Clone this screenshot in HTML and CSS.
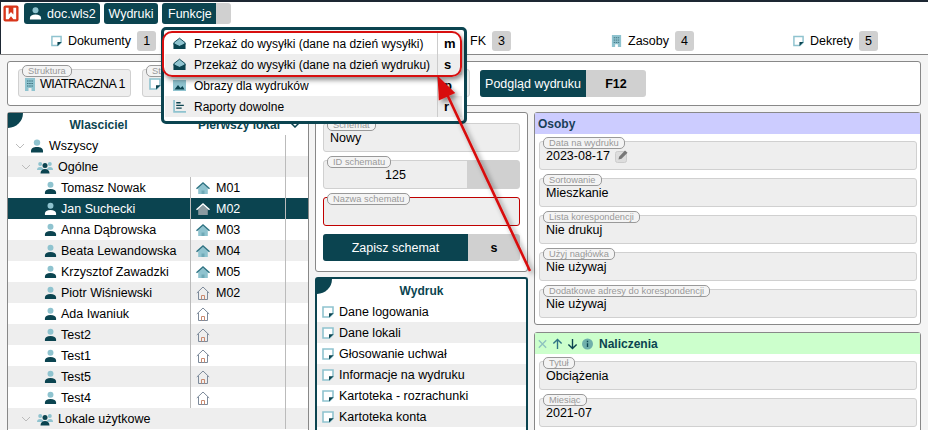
FILE: index.html
```html
<!DOCTYPE html>
<html lang="pl">
  <head>
    <meta charset="UTF-8" />
    <meta name="viewport" content="width=device-width, initial-scale=1.0" />
    <title>Wydruki</title>
    <link rel="stylesheet" href="styles.css">
  </head>
  <body>
    <svg class="sprites" width="0" height="0">
      <symbol id="i-doc" viewBox="0 0 12 12">
        <path d="M1 1h10v6.500L7.500 11H1z" fill="#fff" stroke="#8fc3cf" stroke-width="1.600"/>
        <path d="M7 11.500V7.200h4.600z" fill="#0b4450"/>
      </symbol>
      <symbol id="i-person" viewBox="0 0 14 14">
        <circle cx="7" cy="3.600" r="3.200" fill="#8fc3cf"/>
        <path d="M1 13.500v-1.600C1 9.400 3.400 8 7 8s6 1.400 6 3.900v1.600z" fill="#0b4450"/>
      </symbol>
      <symbol id="i-person-sel" viewBox="0 0 14 14">
        <circle cx="7" cy="3.600" r="3.200" fill="#8fc3cf"/>
        <path d="M1 13.500v-1.600C1 9.400 3.400 8 7 8s6 1.400 6 3.900v1.600z" fill="#fff"/>
      </symbol>
      <symbol id="i-group" viewBox="0 0 16 14">
        <circle cx="3.200" cy="4" r="2" fill="#8fc3cf"/>
        <circle cx="12.800" cy="4" r="2" fill="#8fc3cf"/>
        <path d="M0 10c0-2 1.200-3 3.200-3s3 1 3 3zM10 10c0-2 1-3 3-3s3 1 3 3z" fill="#8fc3cf"/>
        <circle cx="8" cy="5.400" r="2.500" fill="#0b4450"/>
        <path d="M3.500 13.500c0-3 1.800-4.500 4.500-4.500s4.500 1.500 4.500 4.500z" fill="#0b4450"/>
      </symbol>
      <symbol id="i-house" viewBox="0 0 14 13">
        <path d="M2.200 6.500 7 2.500l4.800 4v6H2.200z" fill="#8fc3cf"/>
        <path d="M5.500 9h3v3.500h-3z" fill="#6ea9b6"/>
        <path d="M0 6.800 7 .5l7 6.300-1 1L7 2.500 1 7.800z" fill="#2f7484"/>
      </symbol>
      <symbol id="i-house-sel" viewBox="0 0 14 13">
        <path d="M2.200 6.500 7 2.500l4.800 4v6H2.200z" fill="#8a9aa0"/>
        <path d="M0 6.800 7 .5l7 6.300-1 1L7 2.500 1 7.800z" fill="#fff"/>
      </symbol>
      <symbol id="i-house-empty" viewBox="0 0 14 14">
        <path d="M2.500 6v7.500h9V6M.8 7 7 1l6.200 6" fill="none" stroke="#7d8a9a" stroke-width="1"/>
        <path d="M5.500 13.500V9.500h3v4" fill="none" stroke="#c98a70" stroke-width="1"/>
      </symbol>
      <symbol id="i-building" viewBox="0 0 10 13">
        <path d="M0 0h10v13H6.500V10h-3v3H0z" fill="#8fc3cf"/>
        <path d="M2 3h6M2 5.500h6M2 8h6" stroke="#3c6f7c" stroke-dasharray="1.500 .7"/>
      </symbol>
      <symbol id="i-mail" viewBox="0 0 14 13">
        <path d="M1 5.500 7 .8l6 4.700v2L7 10 1 7.500z" fill="#8fc3cf" stroke="#0b4450"/>
        <path d="M.5 6 7 9.300 13.500 6v6.500H.5z" fill="#0b4450"/>
      </symbol>
      <symbol id="i-image" viewBox="0 0 13 11">
        <path d="M0 0h13v11H0z" fill="#8fc3cf"/>
        <path d="M1.500 9.500 5 5l2.500 3 2-2 2 3.500z" fill="#0b4450"/>
      </symbol>
      <symbol id="i-report" viewBox="0 0 12 12">
        <path d="M1 0v11h11" fill="none" stroke="#8fc3cf" stroke-width="1.600"/>
        <path d="M3 2.500h4M3 5h7M3 7.500h5" stroke="#0b4450" stroke-width="1.300"/>
      </symbol>
    </svg>

    <nav class="topbar">
      <svg class="logo" viewBox="0 0 17 18">
        <rect x="0.500" y="0.500" width="16" height="17" rx="2" fill="#d8351a"/>
        <path d="M3 3h3v7l2.500-2.500L11 10V3h3v12h-3l-2.500-3L6 15H3z" fill="#fff"/>
      </svg>
      <div class="tab tab-user"><svg class="ico"><use href="#i-person-sel"/></svg>doc.wls2</div>
      <div class="tab tab-print">Wydruki</div>
      <div class="tab tab-open"><span>Funkcje</span><i></i></div>
    </nav>

    <div class="modules">
      <div class="module"><svg class="ico"><use href="#i-doc"/></svg>Dokumenty<b>1</b></div>
      <div class="module"></div>
      <div class="module module-fk">FK<b>3</b></div>
      <div class="module"><svg class="ico"><use href="#i-building"/></svg>Zasoby<b>4</b></div>
      <div class="module"><svg class="ico"><use href="#i-doc"/></svg>Dekrety<b>5</b></div>
    </div>

    <main class="content">
      <section class="toolbar">
        <div class="field field-struct">
          <label>Struktura</label>
          <div class="value"><svg class="ico"><use href="#i-building"/></svg>WIATRACZNA 1</div>
        </div>
        <div class="field field-struct2">
          <label>St</label>
          <div class="value"><svg class="ico"><use href="#i-doc"/></svg></div>
        </div>
        <div class="split-btn preview"><span>Podgląd wydruku</span><b>F12</b></div>
      </section>

      <div class="columns">
        <section class="panel owners">
          <i class="corner"></i>
          <div class="owners-head">
            <span class="col-name">Wlasciciel</span>
            <span class="col-unit">Pierwszy lokal</span>
            <svg class="chev" viewBox="0 0 10 6"><path d="M1 1l4 4 4-4" fill="none" stroke="#0b4450" stroke-width="1.500"/></svg>
          </div>
          <div class="tree">
            <div class="row node lvl0"><svg class="chev" viewBox="0 0 10 6"><path d="M1 1l4 4 4-4" fill="none" stroke="#bbb"/></svg><svg class="ico"><use href="#i-person"/></svg>Wszyscy</div>
            <div class="row node lvl1 alt"><svg class="chev" viewBox="0 0 10 6"><path d="M1 1l4 4 4-4" fill="none" stroke="#bbb"/></svg><svg class="ico wide"><use href="#i-group"/></svg>Ogólne</div>
            <div class="row person"><span class="name"><svg class="ico"><use href="#i-person"/></svg>Tomasz Nowak</span><span class="unit"><svg class="ico"><use href="#i-house"/></svg>M01</span></div>
            <div class="row person selected"><span class="name"><svg class="ico"><use href="#i-person-sel"/></svg>Jan Suchecki</span><span class="unit"><svg class="ico"><use href="#i-house-sel"/></svg>M02</span></div>
            <div class="row person"><span class="name"><svg class="ico"><use href="#i-person"/></svg>Anna Dąbrowska</span><span class="unit"><svg class="ico"><use href="#i-house"/></svg>M03</span></div>
            <div class="row person alt"><span class="name"><svg class="ico"><use href="#i-person"/></svg>Beata Lewandowska</span><span class="unit"><svg class="ico"><use href="#i-house"/></svg>M04</span></div>
            <div class="row person"><span class="name"><svg class="ico"><use href="#i-person"/></svg>Krzysztof Zawadzki</span><span class="unit"><svg class="ico"><use href="#i-house"/></svg>M05</span></div>
            <div class="row person alt"><span class="name"><svg class="ico"><use href="#i-person"/></svg>Piotr Wiśniewski</span><span class="unit"><svg class="ico"><use href="#i-house-empty"/></svg>M02</span></div>
            <div class="row person"><span class="name"><svg class="ico"><use href="#i-person"/></svg>Ada Iwaniuk</span><span class="unit"><svg class="ico"><use href="#i-house-empty"/></svg></span></div>
            <div class="row person alt"><span class="name"><svg class="ico"><use href="#i-person"/></svg>Test2</span><span class="unit"><svg class="ico"><use href="#i-house-empty"/></svg></span></div>
            <div class="row person"><span class="name"><svg class="ico"><use href="#i-person"/></svg>Test1</span><span class="unit"><svg class="ico"><use href="#i-house-empty"/></svg></span></div>
            <div class="row person alt"><span class="name"><svg class="ico"><use href="#i-person"/></svg>Test5</span><span class="unit"><svg class="ico"><use href="#i-house-empty"/></svg></span></div>
            <div class="row person"><span class="name"><svg class="ico"><use href="#i-person"/></svg>Test4</span><span class="unit"><svg class="ico"><use href="#i-house-empty"/></svg></span></div>
            <div class="row node lvl1 alt"><svg class="chev" viewBox="0 0 10 6"><path d="M1 1l4 4 4-4" fill="none" stroke="#bbb"/></svg><svg class="ico wide"><use href="#i-group"/></svg>Lokale użytkowe</div>
          </div>
        </section>

        <div class="col-mid">
          <section class="panel schema">
            <div class="field"><label>Schemat</label><div class="value">Nowy</div></div>
            <div class="field field-id"><label>ID schematu</label><div class="value">125</div><i></i></div>
            <div class="field field-error"><label>Nazwa schematu</label><div class="value"></div></div>
            <div class="split-btn save"><span>Zapisz schemat</span><b>s</b></div>
          </section>
          <section class="panel prints">
            <i class="corner"></i>
            <h3>Wydruk</h3>
            <div class="row"><svg class="ico"><use href="#i-doc"/></svg>Dane logowania</div>
            <div class="row alt"><svg class="ico"><use href="#i-doc"/></svg>Dane lokali</div>
            <div class="row"><svg class="ico"><use href="#i-doc"/></svg>Głosowanie uchwał</div>
            <div class="row alt"><svg class="ico"><use href="#i-doc"/></svg>Informacje na wydruku</div>
            <div class="row"><svg class="ico"><use href="#i-doc"/></svg>Kartoteka - rozrachunki</div>
            <div class="row alt"><svg class="ico"><use href="#i-doc"/></svg>Kartoteka konta</div>
          </section>
        </div>

        <div class="col-right">
          <section class="panel options">
            <h4 class="opt-head people">Osoby</h4>
            <div class="opt-body">
              <div class="field"><label>Data na wydruku</label><div class="value">2023-08-17
                <svg class="pencil" viewBox="0 0 14 14"><rect x="0.500" y="2.500" width="11" height="11" rx="2" fill="#ddd" stroke="#ccc"/><path d="M3.500 10.500l.6-2.800L10 1.500l2.500 2.300-6 6z" fill="#777"/></svg></div></div>
              <div class="field"><label>Sortowanie</label><div class="value">Mieszkanie</div></div>
              <div class="field"><label>Lista korespondencji</label><div class="value">Nie drukuj</div></div>
              <div class="field"><label>Użyj nagłówka</label><div class="value">Nie używaj</div></div>
              <div class="field"><label>Dodatkowe adresy do korespondencji</label><div class="value">Nie używaj</div></div>
            </div>
          </section>
          <section class="panel options">
            <h4 class="opt-head charges">
              <svg class="act" viewBox="0 0 12 12"><path d="M2 2l8 8M10 2l-8 8" stroke="#8fc3bf" stroke-width="1.500"/></svg>
              <svg class="act" viewBox="0 0 12 12"><path d="M6 11.500V1M1.500 5.500 6 1l4.500 4.500" fill="none" stroke="#2f7484" stroke-width="1.500"/></svg>
              <svg class="act" viewBox="0 0 12 12"><path d="M6 .5V11M1.500 6.500 6 11l4.500-4.500" fill="none" stroke="#0b4450" stroke-width="1.500"/></svg>
              <svg class="act" viewBox="0 0 12 12"><circle cx="6" cy="6" r="6" fill="#6fb0ab"/><path d="M6 2.500v1.500M6 5.200v4" stroke="#0b4450" stroke-width="1.500"/></svg>
              Naliczenia
            </h4>
            <div class="opt-body">
              <div class="field"><label>Tytuł</label><div class="value">Obciążenia</div></div>
              <div class="field"><label>Miesiąc</label><div class="value">2021-07</div></div>
            </div>
          </section>
        </div>
      </div>
    </main>

    <div class="menu">
      <div class="menu-row"><svg class="ico"><use href="#i-mail"/></svg><span>Przekaż do wysyłki (dane na dzień wysyłki)</span><b>m</b></div>
      <div class="menu-row alt"><svg class="ico"><use href="#i-mail"/></svg><span>Przekaż do wysyłki (dane na dzień wydruku)</span><b>s</b></div>
      <div class="menu-row"><svg class="ico"><use href="#i-image"/></svg><span>Obrazy dla wydruków</span><b>p</b></div>
      <div class="menu-row alt"><svg class="ico"><use href="#i-report"/></svg><span>Raporty dowolne</span><b>r</b></div>
    </div>

    <div class="highlight"></div>
    <svg class="arrow" viewBox="0 0 928 430">
      <defs>
        <filter id="soft" x="-20%" y="-20%" width="140%" height="140%">
          <feDropShadow dx="3" dy="3" stdDeviation="2.500" flood-color="#000" flood-opacity="0.450"/>
        </filter>
      </defs>
      <path d="M530 271 446 92M439 79l14 13.500-13 6z" fill="#d80f0f" stroke="#d80f0f" stroke-width="2.600" filter="url(#soft)"/>
    </svg>
  </body>
</html>
```

FILE: styles.css
```css
* {
  box-sizing: border-box;
}
html,
body {
  height: 430px;
  overflow: hidden;
}
body {
  margin: 0;
  background: #fff;
  border-top: 2px solid #1d2733;
  box-shadow: inset 1px 0 0 #1d2733;
  color: #000;
  font-family: "Liberation Sans", Arial, sans-serif;
  font-size: 12.5px;
  position: relative;
}
.sprites {
  position: absolute;
}
.ico {
  width: 14px;
  height: 14px;
  flex: none;
}
.ico.wide {
  width: 16px;
}
.topbar {
  display: flex;
  align-items: flex-end;
  height: 22px;
  padding-left: 3px;
}
.logo {
  width: 16px;
  height: 17px;
  margin: 0 5px 2px 0;
}
.tab {
  display: flex;
  align-items: center;
  height: 21px;
  margin-right: 4px;
  padding: 0 5px;
  background: #0b4450;
  border-radius: 3px;
  color: #fff;
}
.tab-user {
  width: 76px;
  gap: 5px;
}
.tab-user .ico {
  width: 13px;
  height: 13px;
}
.tab-print {
  justify-content: center;
  width: 54px;
  padding: 0;
}
.tab-open {
  padding: 0;
  background: #d0d0d0;
}
.tab-open span {
  display: flex;
  align-items: center;
  width: 54px;
  height: 100%;
  padding-left: 6px;
  background: #0b4450;
  border-radius: 3px 0 0 3px;
}
.tab-open i {
  width: 15px;
}
.modules {
  display: grid;
  grid-template-columns: repeat(5, 183px);
  height: 31px;
  padding: 3px 0 0 12px;
  border-bottom: 1px solid #888;
}
.module {
  display: flex;
  align-items: center;
  justify-content: center;
}
.module .ico {
  width: 11px;
  height: 12px;
  margin-right: 6px;
}
.module b {
  display: flex;
  align-items: center;
  justify-content: center;
  width: 19px;
  height: 20px;
  margin-left: 6px;
  background: #d0d0d0;
  border-radius: 3px;
  font-weight: normal;
}
.module-fk {
  justify-content: flex-end;
  padding-right: 50px;
}
.content {
  height: 375px;
  padding: 6px 7px 0;
  background: #f4f4f4;
}
.toolbar {
  display: flex;
  align-items: flex-start;
  height: 45px;
  padding: 7px 10px 0;
  background: #fff;
  border: 1px solid #888;
  border-radius: 3px;
}
.field {
  position: relative;
  height: 29px;
  padding: 2px 6px 0;
  background: #eee;
  border: 1px solid #d0d0d0;
  border-radius: 3px;
}
.field label {
  position: absolute;
  top: -5px;
  left: 3px;
  height: 12px;
  padding: 0 5px;
  background: #f4f4f4;
  border: 1px solid #999;
  border-radius: 5px;
  color: #999;
  font-size: 9.3px;
  line-height: 10px;
  white-space: nowrap;
}
.value {
  display: flex;
  align-items: center;
  gap: 5px;
  height: 22px;
  padding-top: 2px;
  white-space: nowrap;
}
.field-struct {
  width: 113px;
  height: 28px;
}
.field-struct .value {
  letter-spacing: -0.55px;
}
.field-struct .ico {
  width: 10px;
  height: 13px;
}
.field-struct2 {
  width: 328px;
  height: 28px;
  margin-left: 11px;
}
.field-struct2 .ico {
  width: 12px;
  height: 12px;
}
.split-btn {
  display: flex;
  align-items: center;
  height: 27px;
  border-radius: 3px;
  overflow: hidden;
  background: #d0d0d0;
}
.split-btn span {
  display: flex;
  align-items: center;
  justify-content: center;
  height: 100%;
  background: #0b4450;
  color: #fff;
}
.split-btn b {
  flex: 1;
  text-align: center;
}
.preview {
  width: 166px;
  margin: 1px 0 0 10px;
}
.preview span {
  width: 106px;
}
.columns {
  display: flex;
  align-items: flex-start;
  gap: 6px;
  margin-top: 6px;
}
.panel {
  position: relative;
  background: #fff;
  border: 1px solid #888;
  border-radius: 3px;
}
.corner {
  position: absolute;
  top: 0;
  left: 0;
  width: 15px;
  height: 15px;
  background: #0b4450;
  border-radius: 0 0 15px 0;
}
.owners {
  width: 302px;
  height: 330px;
  border-bottom: 0;
  border-radius: 3px 3px 0 0;
}
.owners-head {
  display: flex;
  align-items: center;
  height: 22px;
  padding-top: 2px;
  color: #0b4450;
  font-size: 12px;
  font-weight: bold;
}
.col-name {
  width: 181px;
  text-align: center;
}
.col-unit {
  width: 100px;
  padding-left: 9px;
}
.owners-head .chev {
  width: 10px;
  height: 6px;
  margin-left: 1px;
}
.row {
  display: flex;
  align-items: center;
  height: 21px;
}
.alt {
  background: #eee;
}
.tree {
  position: relative;
}
.tree::after {
  content: "";
  position: absolute;
  top: 0;
  bottom: 0;
  left: 277px;
  width: 1px;
  background: #bbb;
}
.node {
  gap: 5px;
}
.node .chev {
  width: 10px;
  height: 6px;
}
.lvl0 {
  padding-left: 7px;
}
.lvl1 {
  padding-left: 13px;
}
.lvl1 .wide {
  margin-left: 1px;
}
.person .name {
  display: flex;
  align-items: center;
  gap: 4px;
  width: 183px;
  height: 100%;
  padding-left: 36px;
  border-right: 1px solid #bbb;
}
.person .ico {
  width: 13px;
  height: 14px;
}
.person .unit {
  display: flex;
  align-items: center;
  gap: 6px;
  height: 100%;
  padding-left: 5px;
}
.person .unit .ico {
  width: 14px;
  height: 14px;
}
.selected {
  background: #0b4450;
  color: #fff;
}
.col-mid {
  display: flex;
  flex-direction: column;
  gap: 5px;
  width: 213px;
}
.schema {
  display: flex;
  flex-direction: column;
  gap: 8px;
  height: 160px;
  padding: 10px 7px 0;
}
.field-id .value {
  justify-content: center;
  width: 145px;
  margin-left: -7px;
}
.field-id i {
  position: absolute;
  top: 0;
  right: 0;
  bottom: 0;
  width: 52px;
  background: #d0d0d0;
}
.field-error {
  border-color: #c00000;
}
.save span {
  width: 145px;
}
.prints {
  height: 160px;
  border: 2px solid #0b4450;
  border-bottom: 0;
  border-radius: 3px 3px 0 0;
}
.prints h3 {
  margin: 0;
  height: 22px;
  color: #0b4450;
  font-size: 12px;
  line-height: 24px;
  text-align: center;
}
.prints .row {
  gap: 5px;
  padding-left: 5px;
}
.prints .ico {
  width: 12px;
  height: 12px;
}
.col-right {
  display: flex;
  flex-direction: column;
  gap: 7px;
  width: 387px;
}
.opt-head {
  display: flex;
  align-items: center;
  height: 21px;
  margin: 0;
  padding-left: 3px;
  color: #1b3f58;
  font-size: 12px;
}
.people {
  background: #ccccff;
}
.charges {
  gap: 4px;
  padding-left: 2px;
  background: #ccffcc;
  color: #0b4450;
}
.charges .act {
  width: 11px;
  height: 12px;
}
.charges .act:last-of-type {
  margin-right: 2px;
}
.opt-body {
  display: flex;
  flex-direction: column;
  gap: 8px;
  padding: 7px 3px 6px 4px;
}
.pencil {
  width: 14px;
  height: 14px;
}
.menu {
  position: absolute;
  top: 25px;
  left: 161px;
  width: 306px;
  height: 97px;
  padding: 3px 2px 0 1px;
  background: #fff;
  border: 3px solid #0b4450;
  border-radius: 5px;
}
.menu-row {
  display: flex;
  align-items: center;
  height: 21px;
  padding-left: 8px;
  font-size: 12px;
}
.menu-row .ico {
  width: 13px;
  height: 13px;
  margin-right: 8px;
}
.menu-row span {
  flex: 1;
  white-space: nowrap;
}
.menu-row b {
  width: 25px;
  font-size: 13px;
  line-height: 21px;
  padding-left: 6px;
  border-left: 1px solid #ccc;
}
.highlight {
  position: absolute;
  top: 29px;
  left: 162px;
  width: 300px;
  height: 46px;
  border: 2px solid #d80f0f;
  border-radius: 10px;
  box-shadow: 2px 3px 5px rgba(0, 0, 0, 0.45);
}
.arrow {
  position: absolute;
  top: -2px;
  left: 0;
  width: 928px;
  height: 430px;
  pointer-events: none;
}
```
